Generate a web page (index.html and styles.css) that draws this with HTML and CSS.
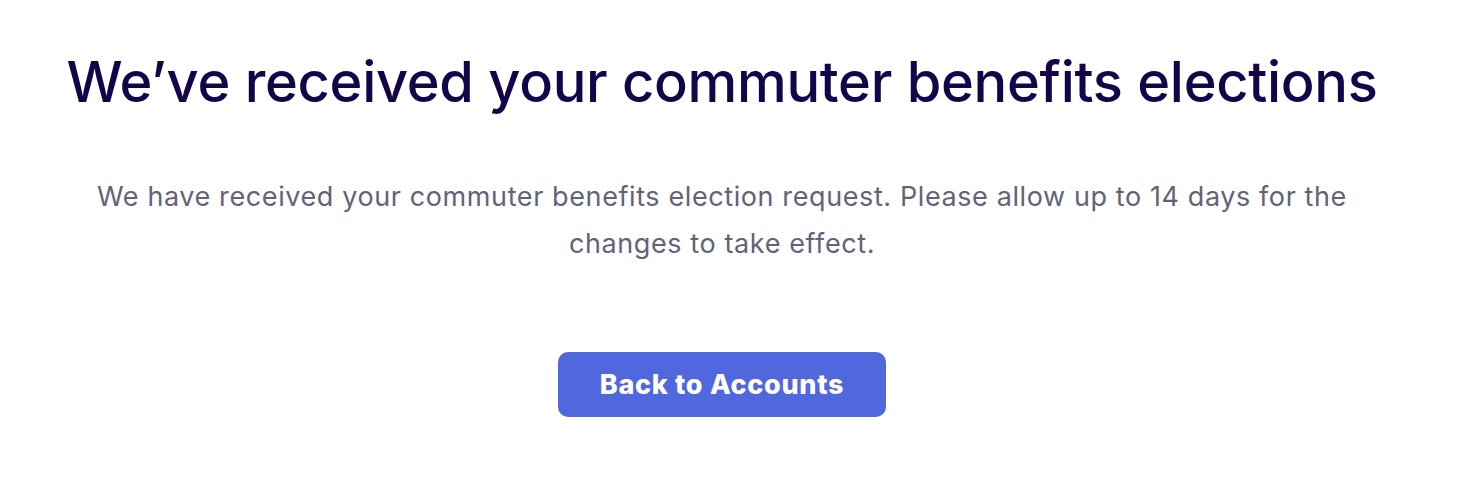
FILE: index.html
```html
<!DOCTYPE html>
<html lang="en">
<head>
<meta charset="utf-8">
<link rel="stylesheet" href="styles.css">
</head>
<body>
<main class="page">
  <h1 class="title">We’ve received your commuter benefits elections</h1>
  <p class="message">We have received your commuter benefits election request. Please allow up to 14 days for the changes to take effect.</p>
  <button class="primary-btn" type="button">Back to Accounts</button>
</main>
</body>
</html>
```

FILE: styles.css
```css
html, body {
  margin: 0;
  padding: 0;
  background: #ffffff;
}
.page {
  width: 1444px;
  display: flex;
  flex-direction: column;
  align-items: center;
  font-family: Inter, "Noto Sans", sans-serif;
  padding-top: 46px;
}
.title {
  margin: 0;
  font-size: 56px;
  font-weight: 500;
  color: #14054a;
  letter-spacing: -0.3px;
  line-height: 72px;
  text-align: center;
}
.message {
  margin: 55px 0 0;
  max-width: 1270px;
  font-size: 27px;
  line-height: 47px;
  color: #62637a;
  letter-spacing: 0.6px;
  text-align: center;
}
.primary-btn {
  margin-top: 85px;
  width: 328px;
  height: 65px;
  border: none;
  border-radius: 10px;
  background: #5067dd;
  color: #ffffff;
  font-family: Inter, "Noto Sans", sans-serif;
  font-size: 27px;
  font-weight: 800;
  letter-spacing: 0.7px;
  cursor: pointer;
}
```
